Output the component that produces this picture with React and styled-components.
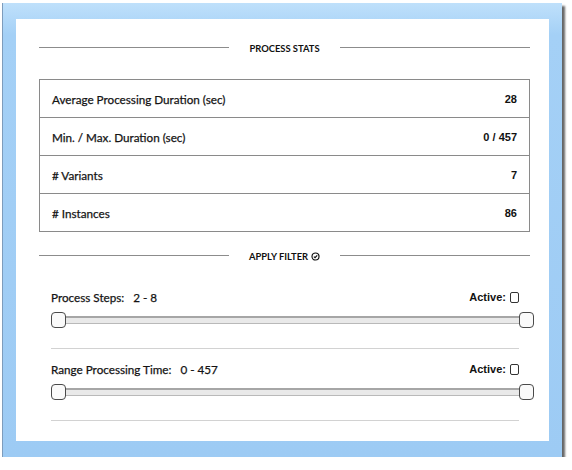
import React from 'react';
import styled, { createGlobalStyle } from 'styled-components';

const GlobalStyle = createGlobalStyle`
  html, body {
    margin: 0;
    padding: 0;
    background: #ffffff;
  }
  body {
    font-family: Lato, "Liberation Sans", sans-serif;
    color: #141414;
  }
`;

const Frame = styled.div`
  box-sizing: border-box;
  width: 560px;
  height: 454px;
  margin: 3px 0 0 2px;
  padding: 16px 13px;
  background: linear-gradient(180deg, #bfe0fb 0%, #a4d0f6 7%, #9dcbf4 100%);
  border-left: 1px solid #7d9cbc;
  box-shadow: 3px 3px 2px rgba(0, 0, 0, 0.6);
`;

const Panel = styled.div`
  box-sizing: border-box;
  height: 100%;
  background: #fff;
  padding: 19px 19px 0 23px;
`;

const Heading = styled.div`
  display: flex;
  align-items: center;
  height: 20px;
  margin-top: ${p => p.$top || 0}px;
  font-size: 9.4px;
  font-weight: 700;
  color: #111;

  &::before, &::after {
    content: '';
    flex: 1;
    height: 1px;
    border-top: 1px solid #8c8c8c;
  }
`;

const HeadingText = styled.span`
  display: flex;
  align-items: center;
  gap: 3px;
  margin: 0 20px;
`;

const Table = styled.div`
  margin-top: 21px;
  border: 1px solid #8a8a8a;
`;

const Row = styled.div`
  display: flex;
  align-items: center;
  justify-content: space-between;
  height: 37px;
  padding: 0 12px;
  font-size: 11.7px;
  -webkit-text-stroke: 0.25px #141414;
  & + & {
    border-top: 1px solid #8a8a8a;
  }
`;

const Value = styled.span`
  font-family: "Liberation Sans", sans-serif;
  font-weight: 700;
  font-size: 11px;
  color: #111;
  -webkit-text-stroke: 0;
`;

const Filters = styled.div`
  padding: 0 11px 0 12px;
`;

const Block = styled.div`
  padding: ${p => (p.$first ? 23 : 12)}px 0 20px;
  border-bottom: 1px solid #d2d2d2;
`;

const LabelRow = styled.div`
  display: flex;
  align-items: center;
  justify-content: space-between;
  height: 16px;
  font-size: 11.7px;
`;

const Label = styled.span`
  -webkit-text-stroke: 0.25px #141414;
`;

const Range = styled.span`
  margin-left: 9px;
`;

const Active = styled.label`
  display: flex;
  align-items: center;
  gap: 4px;
  font-family: "Liberation Sans", sans-serif;
  font-weight: 700;
  font-size: 11px;
  color: #111;
`;

const Box = styled.span`
  box-sizing: border-box;
  width: 9px;
  height: 11px;
  border: 1.3px solid #333;
  border-radius: 2px;
`;

const Slider = styled.div`
  position: relative;
  height: 16px;
  margin-top: 7px;
`;

const Track = styled.div`
  position: absolute;
  left: 2px;
  right: 0;
  top: 4px;
  height: 8px;
  box-sizing: border-box;
  background: #e9e9e9;
  border-top: 2px solid #a6a6a6;
  border-bottom: 1px solid #b9b9b9;
`;

const Handle = styled.div`
  position: absolute;
  top: 0;
  box-sizing: border-box;
  width: 15px;
  height: 16px;
  background: #fafafa;
  border: 1px solid #4a4a4a;
  border-radius: 4px;
`;

const CheckCircle = () => (
  <svg width="9" height="9" viewBox="0 0 10 10">
    <circle cx="5" cy="5" r="3.9" fill="none" stroke="#111" strokeWidth="1.3" />
    <path d="M3.2 5.2 L4.5 6.4 L6.9 3.7" fill="none" stroke="#111" strokeWidth="1.3" />
  </svg>
);

const stats = [
  ['Average Processing Duration (sec)', '28'],
  ['Min. / Max. Duration (sec)', '0 / 457'],
  ['# Variants', '7'],
  ['# Instances', '86'],
];

const filters = [
  { label: 'Process Steps:', min: 2, max: 8, from: 2, to: 8 },
  { label: 'Range Processing Time:', min: 0, max: 457, from: 0, to: 457 },
];

function RangeSlider({ min, max, from, to }) {
  const pct = v => ((v - min) / (max - min)) * 100;
  return (
    <Slider>
      <Track />
      <Handle style={{ left: `${pct(from)}%` }} />
      <Handle style={{ left: `${pct(to)}%` }} />
    </Slider>
  );
}

export default function App() {
  return (
    <>
      <GlobalStyle />
      <Frame>
        <Panel>
          <Heading>
            <HeadingText>PROCESS STATS</HeadingText>
          </Heading>
          <Table>
            {stats.map(([label, value]) => (
              <Row key={label}>
                <span>{label}</span>
                <Value>{value}</Value>
              </Row>
            ))}
          </Table>
          <Heading $top={14}>
            <HeadingText>
              APPLY FILTER <CheckCircle />
            </HeadingText>
          </Heading>
          <Filters>
            {filters.map((f, i) => (
              <Block key={f.label} $first={i === 0}>
                <LabelRow>
                  <Label>
                    {f.label}
                    <Range>{f.from} - {f.to}</Range>
                  </Label>
                  <Active>
                    Active: <Box />
                  </Active>
                </LabelRow>
                <RangeSlider {...f} />
              </Block>
            ))}
          </Filters>
        </Panel>
      </Frame>
    </>
  );
}
